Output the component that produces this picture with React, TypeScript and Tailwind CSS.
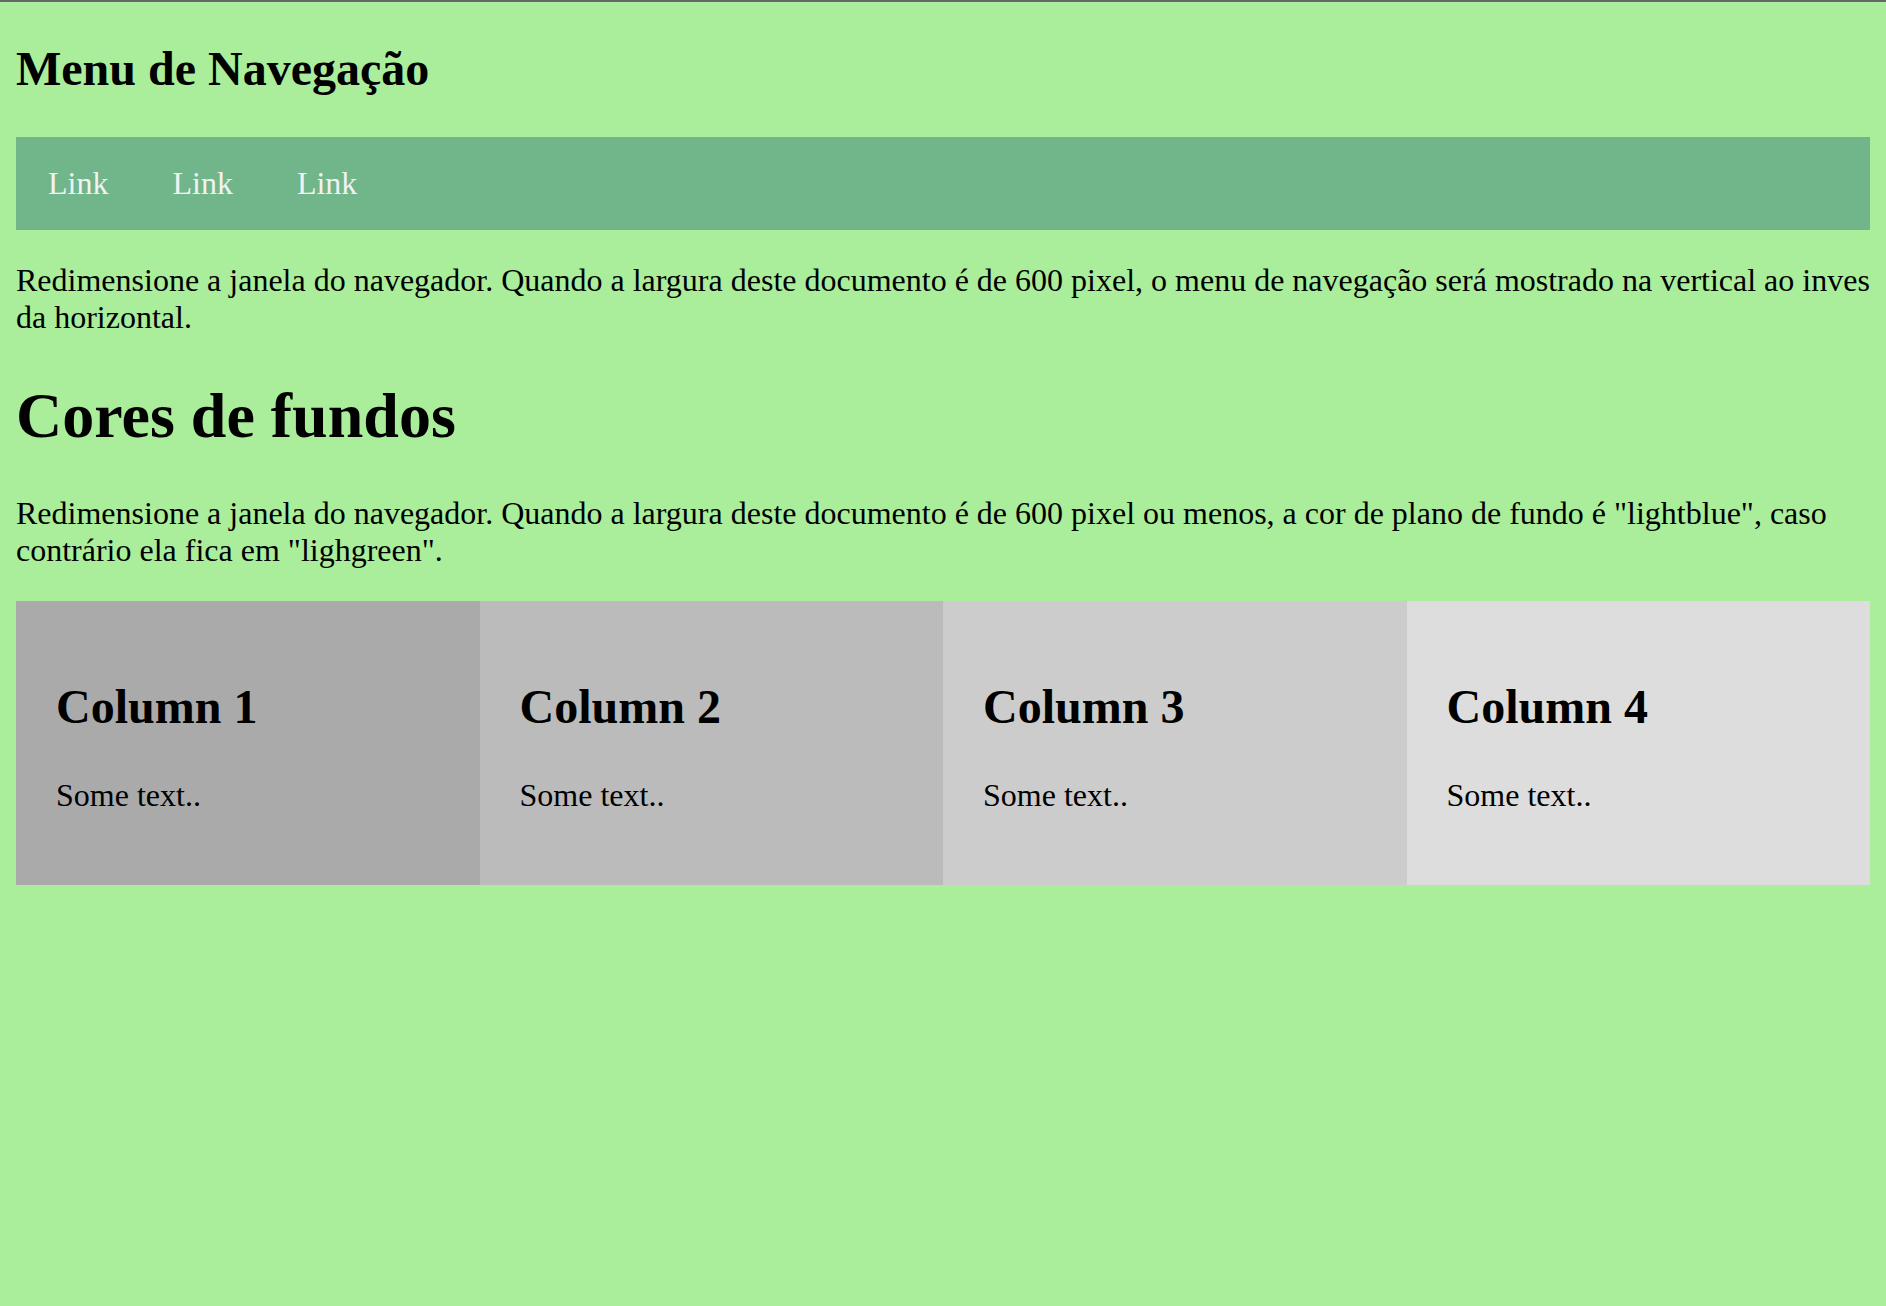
import React from 'react';

const columns = [
  { id: 1, bg: 'bg-[#aaaaaa]' },
  { id: 2, bg: 'bg-[#bbbbbb]' },
  { id: 3, bg: 'bg-[#cccccc]' },
  { id: 4, bg: 'bg-[#dddddd]' },
];

const App: React.FC = () => {
  return (
    <div className="min-h-screen border-t-2 border-[#666666] bg-[#aaee9b] px-4 pb-4 font-['Liberation_Serif','Times_New_Roman',serif] text-black">
      <h2 className="pt-[39px] text-[48px] font-bold leading-[55px]">Menu de Navegação</h2>

      <nav className="mt-[41px] flex bg-[#71b58a]">
        {['Link', 'Link', 'Link'].map((label, i) => (
          <a key={i} href="#" className="block px-8 py-7 text-[32px] leading-[37px] text-[#f2f2f2]">
            {label}
          </a>
        ))}
      </nav>

      <p className="mt-8 text-[32px] leading-[37px]">
        Redimensione a janela do navegador. Quando a largura deste documento é de 600 pixel, o menu de navegação será
        mostrado na vertical ao inves da horizontal.
      </p>

      <h1 className="mt-[43px] text-[64px] font-bold leading-[74px]">Cores de fundos</h1>

      <p className="mt-[42px] text-[32px] leading-[37px]">
        Redimensione a janela do navegador. Quando a largura deste documento é de 600 pixel ou menos, a cor de plano de
        fundo é "lightblue", caso contrário ela fica em "lighgreen".
      </p>

      <div className="mt-8 grid grid-cols-4">
        {columns.map((col) => (
          <div key={col.id} className={`${col.bg} p-10`}>
            <h2 className="mt-[38px] text-[48px] font-bold leading-[55px]">Column {col.id}</h2>
            <p className="mt-[43px] mb-[31px] text-[32px] leading-[37px]">Some text..</p>
          </div>
        ))}
      </div>
    </div>
  );
};

export default App;
